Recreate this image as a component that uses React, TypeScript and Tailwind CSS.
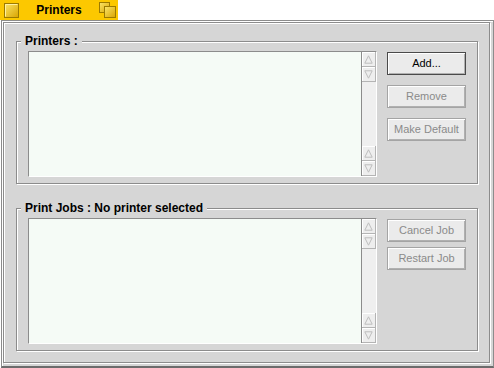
import React from "react";

/**
 * Printers settings window: a yellow title tab over a grey frame holding
 * two etched group boxes, each with a list and a column of buttons.
 */

function TabIconLeft() {
  return (
    <svg width="15" height="15" viewBox="0 0 15 15">
      <defs>
        <linearGradient id="tl" x1="0" y1="0" x2="1" y2="1">
          <stop offset="0" stopColor="#fbe56a" />
          <stop offset="1" stopColor="#d9a400" />
        </linearGradient>
      </defs>
      <rect x="0.5" y="0.5" width="14" height="14" fill="url(#tl)" stroke="#9c7a00" />
      <path d="M1.5 13.5 L1.5 1.5 L13.5 1.5" fill="none" stroke="#fff1a0" />
    </svg>
  );
}

function TabIconRight() {
  return (
    <svg width="17" height="16" viewBox="0 0 17 16">
      <defs>
        <linearGradient id="tr" x1="0" y1="0" x2="1" y2="1">
          <stop offset="0" stopColor="#fbe56a" />
          <stop offset="1" stopColor="#d9a400" />
        </linearGradient>
      </defs>
      <rect x="0.5" y="0.5" width="10" height="10" fill="url(#tr)" stroke="#9c7a00" />
      <rect x="5.5" y="4.5" width="11" height="11" fill="url(#tr)" stroke="#9c7a00" />
    </svg>
  );
}

function ArrowBtn({ dir }: { dir: "up" | "down" }) {
  return (
    <div className="flex h-[15px] w-[14px] items-center justify-center border-b border-r border-[#b4b4b4] bg-[#eeeeee] shadow-[inset_1px_1px_0_#ffffff]">
      <svg width="9" height="9" viewBox="0 0 9 9">
        {dir === "up" ? (
          <path d="M4.5 0.8 L8.2 8.2 L0.8 8.2 Z" fill="none" stroke="#bdbdbd" />
        ) : (
          <path d="M0.8 0.8 L8.2 0.8 L4.5 8.2 Z" fill="none" stroke="#bdbdbd" />
        )}
      </svg>
    </div>
  );
}

function ListBox() {
  return (
    <div className="flex h-[126px] w-[349px] border border-b-white border-l-[#8c8c8c] border-r-white border-t-[#8c8c8c]">
      <div className="flex-1 bg-[#f5fbf6]" />
      <div className="flex w-[15px] flex-col justify-between border-l border-[#8c8c8c] bg-[#efefef]">
        <div>
          <ArrowBtn dir="up" />
          <ArrowBtn dir="down" />
        </div>
        <div>
          <ArrowBtn dir="up" />
          <ArrowBtn dir="down" />
        </div>
      </div>
    </div>
  );
}

function Button({ label, disabled, isDefault }: { label: string; disabled?: boolean; isDefault?: boolean }) {
  return (
    <div
      className={
        "flex h-[23px] w-[79px] items-center justify-center border bg-[#ebebeb] text-[11px] shadow-[inset_1px_1px_0_#ffffff,inset_-1px_-1px_0_#b0b0b0] " +
        (isDefault ? "border-[#4a4a4a] " : "border-[#a4a4a4] ") +
        (disabled ? "text-[#8a8a8a]" : "text-black")
      }
    >
      {label}
    </div>
  );
}

function Group({ title, children, gap }: { title: string; children: React.ReactNode; gap: string }) {
  return (
    <div className="relative flex h-[143px] w-[462px] border border-[#8c8c8c] pl-[11px] pt-[9px] shadow-[inset_1px_1px_0_#ffffff,1px_1px_0_#ffffff]">
      <span className="absolute left-[4px] top-[-8px] bg-[#d6d6d6] px-[4px] text-[12px] font-bold leading-[14px] text-black">
        {title}
      </span>
      <ListBox />
      <div className={"ml-[10px] mt-px flex flex-col " + gap}>{children}</div>
    </div>
  );
}

export default function App() {
  return (
    <div className="flex h-[368px] w-[494px] flex-col bg-white font-['Liberation_Sans',Arial,sans-serif]">
      <div className="flex h-[20px] w-[118px] items-center bg-[#fcc800] pl-[4px] pr-[2px]">
        <TabIconLeft />
        <span className="flex-1 text-center text-[12px] font-bold leading-none text-black">Printers</span>
        <TabIconRight />
      </div>
      <div className="ml-px h-[348px] w-[493px] border border-b-2 border-[#8c8c8c] border-b-[#6c6c6c] bg-[#d6d6d6] shadow-[inset_1px_1px_0_#ffffff]">
        <div className="ml-px mt-px flex h-[341px] w-[487px] flex-col gap-[24px] border border-[#8c8c8c] pl-[12px] pt-[18px] shadow-[inset_1px_1px_0_#ffffff,1px_1px_0_#ffffff]">
          <Group title="Printers :" gap="gap-[10px]">
            <Button label="Add..." isDefault />
            <Button label="Remove" disabled />
            <Button label="Make Default" disabled />
          </Group>
          <Group title="Print Jobs : No printer selected" gap="gap-[5px]">
            <Button label="Cancel Job" disabled />
            <Button label="Restart Job" disabled />
          </Group>
        </div>
      </div>
    </div>
  );
}
